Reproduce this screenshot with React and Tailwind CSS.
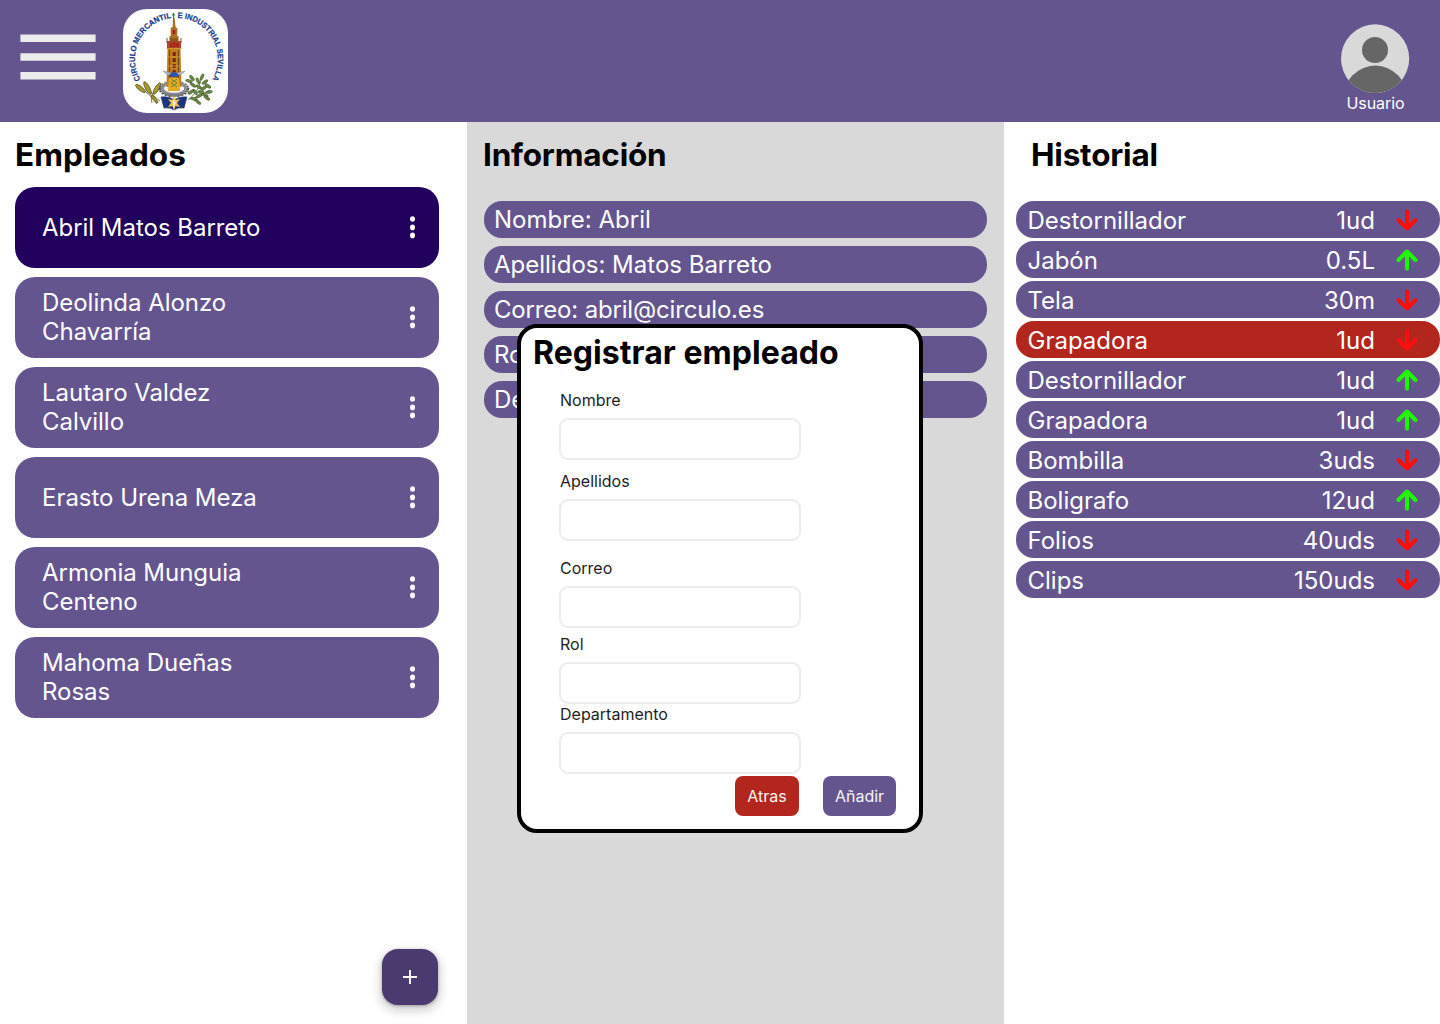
import React from "react";

const employees = [
  "Abril Matos Barreto",
  "Deolinda Alonzo Chavarría",
  "Lautaro Valdez Calvillo",
  "Erasto Urena Meza",
  "Armonia Munguia Centeno",
  "Mahoma Dueñas Rosas",
];

const details = [
  { text: "Nombre: Abril" },
  { text: "Apellidos: Matos Barreto" },
  { text: "Correo: abril@circulo.es", tracking: "tracking-[-0.17px]" },
  { text: "Rol" },
  { text: "Dep." },
];

const history = [
  { item: "Destornillador", amount: "1ud", up: false },
  { item: "Jabón", amount: "0.5L", up: true },
  { item: "Tela", amount: "30m", up: false },
  { item: "Grapadora", amount: "1ud", up: false, alert: true },
  { item: "Destornillador", amount: "1ud", up: true },
  { item: "Grapadora", amount: "1ud", up: true },
  { item: "Bombilla", amount: "3uds", up: false },
  { item: "Boligrafo", amount: "12ud", up: true },
  { item: "Folios", amount: "40uds", up: false },
  { item: "Clips", amount: "150uds", up: false },
];

const fields = [
  { label: "Nombre", gap: "mt-[16px]" },
  { label: "Apellidos", gap: "mt-[10px]" },
  { label: "Correo", gap: "mt-[16px]" },
  { label: "Rol", gap: "mt-[5px]" },
  { label: "Departamento", gap: "-mt-px" },
];

function Logo() {
  const teeth = Array.from({ length: 20 }, (_, i) => (i * Math.PI) / 10);
  return (
    <svg width="105" height="104" viewBox="0 0 105 104" className="block">
      <defs>
        <path id="leftArc" d="M17.5 70.5 A41 41 0 0 1 49.5 9" />
        <path id="rightArc" d="M54.5 9 A40.5 41 0 0 1 88.5 72" />
      </defs>
      <g fill="#17398f" stroke="#17398f" strokeWidth="0.2" fontFamily="Liberation Sans, sans-serif" fontWeight="700" fontSize="7.9">
        <text>
          <textPath href="#leftArc" textLength="81" lengthAdjust="spacingAndGlyphs">CIRCULO MERCANTIL</textPath>
        </text>
        <text>
          <textPath href="#rightArc" textLength="85" lengthAdjust="spacingAndGlyphs">E INDUSTRIAL SEVILLA</textPath>
        </text>
      </g>
      {/* wheat */}
      <g fill="none" stroke="#727437" strokeWidth="0.9">
        <path d="M18 79 Q27 85 34 95" />
        <path d="M26 80 Q30 88 37 92" />
        <path d="M32 82 Q27 88 29 94" />
      </g>
      <g fill="#a79a2c" stroke="#4e4a25" strokeWidth="0.7">
        <ellipse cx="17.5" cy="79.5" rx="6" ry="2" transform="rotate(38 17.5 79.5)" />
        <ellipse cx="24.5" cy="79" rx="7" ry="2.1" transform="rotate(62 24.5 79)" />
        <ellipse cx="34" cy="79.5" rx="6.5" ry="2.1" transform="rotate(-58 34 79.5)" />
        <ellipse cx="31.5" cy="90" rx="5" ry="1.3" transform="rotate(50 31.5 90)" />
      </g>
      {/* olive branches */}
      <g fill="none" stroke="#576d35" strokeWidth="0.8">
        <path d="M65 91 Q76 83 79 67" />
        <path d="M66 90 Q78 88 87 81" />
      </g>
      <g fill="#6d8a43" stroke="#374f25" strokeWidth="0.5">
        {[
          [69, 69, 50], [70, 76, 35], [75, 72, 65], [79, 68, -65], [82, 73, -35],
          [76, 78, 30], [81, 79, -35], [85, 77, 35], [86, 83, -10], [82, 86, 25],
          [76, 87, -25], [72, 83, 50], [68, 83, -35], [78, 83, 5], [84, 89, 35],
          [71, 90, 15], [75, 93, 40], [66, 72, 15],
        ].map(([x, y, a]) => (
          <ellipse key={x + "-" + y} cx={x} cy={y} rx="3.4" ry="1.4" transform={`rotate(${a} ${x} ${y})`} />
        ))}
      </g>
      {/* gear */}
      <g stroke="#4f5052" strokeWidth="2">
        {teeth.map((t) => (
          <path
            key={t}
            d={`M${51 + 12 * Math.cos(t)} ${80 + 6 * Math.sin(t)}L${51 + 15.3 * Math.cos(t)} ${80 + 8.3 * Math.sin(t)}`}
          />
        ))}
      </g>
      <ellipse cx="51" cy="79.5" rx="11.8" ry="6" fill="#fff" stroke="#8c8d8f" strokeWidth="3.4" />
      {/* tower */}
      <path d="M50.5 4v10M48.8 6h3.4" stroke="#35794b" strokeWidth="1.2" />
      <path d="M50.3 9h1.4l.8 9 1.8 1v9h-6.6v-9l1.8-1z" fill="#a87026" />
      <path d="M46.5 27h9v6h-9z" fill="#8c561d" />
      <path d="M44 32h14v8H44z" fill="#a3492a" />
      <path d="M44 29v5M58 29v5" stroke="#8a4c28" strokeWidth="1" />
      <path d="M44.5 40h13l1 38h-15z" fill="#c17e22" />
      <path d="M46.5 41v30M55.5 41v30" stroke="#744719" strokeWidth="1.2" />
      <path d="M51.2 43v20" stroke="#7f2018" strokeWidth="3" strokeDasharray="4 2" />
      <path d="M47 28h8M43.5 39.5h15M45 48h12M45 57h12" stroke="#d79b35" strokeWidth="0.9" />
      <path d="M47 34h2v4h-2zM50.2 33h2v5h-2zM53.5 34h2v4h-2zM49.7 21h2.6v4h-2.6z" fill="#b01c1c" />
      {/* winged cap and caduceus */}
      <path d="M40 62q8 1 11 4 3-3 11-4-3 4-8 4h-6q-5 0-8-4z" fill="#b8bcc3" stroke="#75777d" strokeWidth="0.4" />
      <path d="M46 68q1-5 5-5t5 5z" fill="#3155a4" />
      <path d="M46 69h10l1 13h-12z" fill="#e3aa24" />
      <path d="M48 70l6 4-6 4M54 70l-6 4 6 4" fill="none" stroke="#66842f" strokeWidth="0.9" />
      <path d="M40 83q11 5 22 0l-2 3q-9 4-18 0z" fill="#747578" />
      {/* book */}
      <path d="M38 88q8-1 13 3 6-4 13-3l-3 11q-6-1-10 2-4-3-10-2z" fill="#20357f" stroke="#17255e" strokeWidth="0.6" />
      <path d="M51 86l1.5 5 4.5-1-3 4 3 4-4.5-1-1.5 5-1.5-5-4.5 1 3-4-3-4 4.5 1z" fill="#ecc456" />
      <path d="M50 90l3 4-3 5z" fill="#f7ecce" />
    </svg>
  );
}

function Avatar() {
  return (
    <svg width="69" height="70" viewBox="0 0 69 70" className="block">
      <defs>
        <clipPath id="avatarClip">
          <ellipse cx="34.1" cy="34.7" rx="34.1" ry="34.4" />
        </clipPath>
      </defs>
      <g clipPath="url(#avatarClip)">
        <rect width="69" height="70" fill="#d9d9d9" />
        <circle cx="34" cy="26" r="13" fill="#666" />
        <ellipse cx="34.3" cy="76" rx="32.5" ry="34.5" fill="#666" />
      </g>
    </svg>
  );
}

function Arrow({ up }) {
  return (
    <svg
      width="24"
      height="24"
      viewBox="0 0 24 24"
      fill="none"
      stroke={up ? "#21f505" : "#fa0f0f"}
      strokeWidth="4"
      strokeLinecap="round"
      strokeLinejoin="round"
      className={up ? "ml-5" : "ml-5 rotate-180"}
    >
      <path d="M12 20.5V3.5M3.5 12L12 3.5L20.5 12" />
    </svg>
  );
}

export default function App() {
  return (
    <div className="relative flex h-[1024px] w-[1440px] flex-col overflow-hidden bg-white font-['Inter',sans-serif]">
      <header className="flex h-[122px] shrink-0 items-start justify-between bg-[#65558f] pr-[30px] pl-5">
        <div className="flex">
          <button className="mt-[34px] h-[46px] w-[76px]" aria-label="Menú">
            <svg width="76" height="46" viewBox="0 0 76 46" fill="#ececec" className="block">
              <path d="M.4.5h75.2V8H.4zM.4 19.3h75.2v7.5H.4zM.4 38h75.2v7.5H.4z" />
            </svg>
          </button>
          <div className="mt-[9px] ml-[27px] h-[104px] w-[105px] overflow-hidden rounded-[24px] bg-[#fefefe]">
            <Logo />
          </div>
        </div>
        <div className="mt-6 flex flex-col items-center">
          <Avatar />
          <span className="-mt-px text-base leading-5 tracking-[-0.05px] text-white">Usuario</span>
        </div>
      </header>

      <main className="flex flex-1">
        <section className="flex w-[467px] flex-col pl-[15px]">
          <h2 className="mt-[13px] h-10 text-[31.5px] leading-[39px] font-bold tracking-[0.05px]">Empleados</h2>
          <ul className="mt-3 flex w-[424px] flex-col gap-[9px]">
            {employees.map((name, i) => (
              <li
                key={name}
                className={
                  "flex h-[81px] items-center justify-between rounded-[20px] pr-6 pb-px pl-[27px] text-2xl leading-[29px] text-white " +
                  (i === 0 ? "bg-[#21005d]" : "bg-[#65558f]")
                }
              >
                <span className="w-[235px] tracking-[-0.03px]">{name}</span>
                <svg width="5" height="24" viewBox="0 0 5 24" fill="#fff">
                  <ellipse cx="2.5" cy="4" rx="2.5" ry="2.8" />
                  <ellipse cx="2.5" cy="12.4" rx="2.5" ry="2.8" />
                  <ellipse cx="2.5" cy="20.4" rx="2.5" ry="2.8" />
                </svg>
              </li>
            ))}
          </ul>
          <button
            className="mt-auto mr-[29px] mb-[19px] flex size-14 items-center justify-center self-end rounded-2xl bg-[#4a3a70] shadow-[0_1px_3px_rgba(0,0,0,0.3),0_4px_8px_3px_rgba(0,0,0,0.15)]"
            aria-label="Añadir empleado"
          >
            <svg width="24" height="24" viewBox="0 0 24 24" fill="#fff">
              <path d="M11 13H5v-2h6V5h2v6h6v2h-6v6h-2z" />
            </svg>
          </button>
        </section>

        <section className="w-[537px] bg-[#d9d9d9] pr-[17px] pl-[17px]">
          <h2 className="mt-[13px] -ml-px h-10 text-[31.5px] leading-[39px] font-bold tracking-[-0.2px]">Información</h2>
          <ul className="mt-[26px] flex flex-col gap-2">
            {details.map(({ text, tracking = "" }) => (
              <li
                key={text}
                className={"h-[37px] rounded-[18px] bg-[#65558f] pl-2.5 text-2xl leading-[37px] text-white " + tracking}
              >
                {text}
              </li>
            ))}
          </ul>
        </section>

        <section className="flex-1 pl-3">
          <h2 className="mt-[13px] ml-[15px] h-10 text-[31.5px] leading-[39px] font-bold tracking-[-0.2px]">Historial</h2>
          <ul className="mt-[26px] flex flex-col gap-[3px]">
            {history.map(({ item, amount, up, alert }, i) => (
              <li
                key={i}
                className={
                  "flex h-[37px] items-center rounded-[18px] pr-[21px] pl-[11.5px] text-2xl text-white " +
                  (alert ? "bg-[#b3261e]" : "bg-[#65558f]")
                }
              >
                <span className="flex-1 pt-[3px] leading-9">{item}</span>
                <span className="pt-[3px] leading-9">{amount}</span>
                <Arrow up={up} />
              </li>
            ))}
          </ul>
        </section>
      </main>

      <div className="absolute top-[324px] left-[517px] flex h-[509px] w-[406px] flex-col rounded-[20px] border-4 border-black bg-white">
        <h2 className="mt-[5px] ml-3 h-10 text-[32px] leading-10 font-bold tracking-[0.05px]">Registrar empleado</h2>
        <form className="ml-[38px] flex w-[242px] flex-col">
          {fields.map(({ label, gap }) => (
            <label key={label} className={"flex flex-col pl-px text-base leading-[22px] text-[#1e1e1e] " + gap}>
              {label}
              <input className="mt-[7px] -ml-px h-[42px] w-[242px] rounded-[9px] border-2 border-[#ececec] bg-white" />
            </label>
          ))}
        </form>
        <div className="mt-[2px] mr-[23px] flex gap-6 self-end text-base text-[#f5f5f5]">
          <button className="h-10 w-16 rounded-lg bg-[#b3261e]">Atras</button>
          <button className="h-10 w-[73px] rounded-lg bg-[#65558f]">Añadir</button>
        </div>
      </div>
    </div>
  );
}
